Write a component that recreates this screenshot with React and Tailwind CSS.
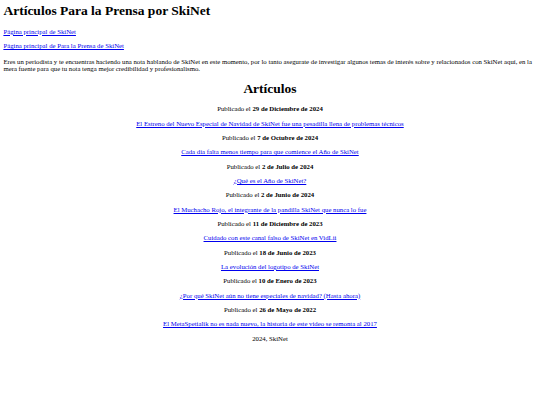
export default function App() {
  const articles = [
    ["29 de Diciembre de 2024", "El Estreno del Nuevo Especial de Navidad de SkiNet fue una pesadilla llena de problemas técnicos"],
    ["7 de Octubre de 2024", "Cada día falta menos tiempo para que comience el Año de SkiNet"],
    ["2 de Julio de 2024", "¿Qué es el Año de SkiNet?"],
    ["2 de Junio de 2024", "El Muchacho Rojo, el integrante de la pandilla SkiNet que nunca lo fue"],
    ["11 de Diciembre de 2023", "Cuidado con este canal falso de SkiNet en VidLii"],
    ["18 de Junio de 2023", "La evolución del logotipo de SkiNet"],
    ["10 de Enero de 2023", "¿Por qué SkiNet aún no tiene especiales de navidad? (Hasta ahora)"],
    ["26 de Mayo de 2022", "El MetaSpetialik no es nada nuevo, la historia de este video se remonta al 2017"],
  ];
  return (
    <div className="min-h-[405px] bg-white text-black px-[3.4px] pt-[3.4px] text-[6.75px] leading-[1.15] [font-family:Liberation_Serif,serif]">
      <h1 className="text-[13.5px] font-bold leading-[1.15] mb-[9px]">Artículos Para la Prensa por SkiNet</h1>
      <p className="my-[6.75px]"><a href="#" className="text-[#0000ee] underline">Página principal de SkiNet</a></p>
      <p className="my-[6.75px]"><a href="#" className="text-[#0000ee] underline">Página principal de Para la Prensa de SkiNet</a></p>
      <p className="mt-[7.5px] mb-[6.75px]">Eres un periodista y te encuentras haciendo una nota hablando de SkiNet en este momento, por lo tanto asegurate de investigar algunos temas de interés sobre y relacionados con SkiNet aquí, en la mera fuente para que tu nota tenga mejor credibilidad y profesionalismo.</p>
      <h2 className="text-[13.5px] font-bold leading-[1.15] text-center mt-[8px] mb-[8.5px]">Artículos</h2>
      <div className="text-center">
        {articles.map(([d, t]) => (
          <div key={d}>
            <p className="my-[6.6px]">Publicado el <b>{d}</b></p>
            <p className="my-[6.6px]"><a href="#" className="text-[#0000ee] underline">{t}</a></p>
          </div>
        ))}
        <p className="my-[6.6px]">2024, SkiNet</p>
      </div>
    </div>
  );
}
